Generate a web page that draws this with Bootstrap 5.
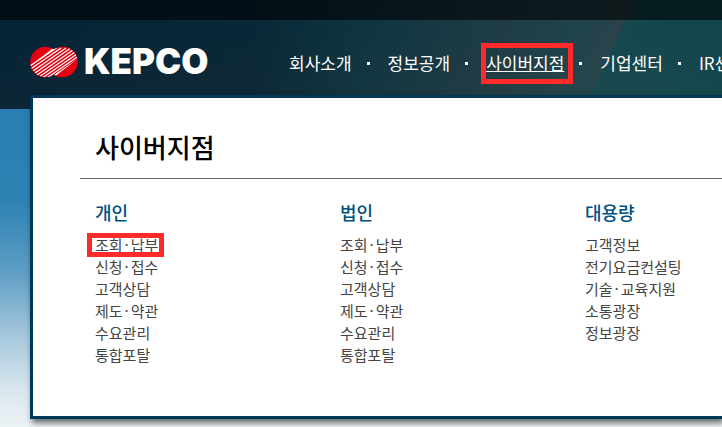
<!DOCTYPE html>
<html lang="ko">
<head>
<meta charset="utf-8">
<meta name="viewport" content="width=device-width, initial-scale=1">
<title>KEPCO 사이버지점</title>
<link href="https://cdn.jsdelivr.net/npm/bootstrap@5.3.0/dist/css/bootstrap.min.css" rel="stylesheet">
<style>
  body {
    font-family: "Noto Sans CJK KR", "Noto Sans", sans-serif;
    background: linear-gradient(#2478ac 0, #2a80b3 120px, #2d82b3 200px, #5c9dc5 270px, #a5c7dc 335px, #d9e6ee 390px, #edf3f6 427px) #edf3f6;
    min-height: 100vh;
    overflow-x: hidden;
  }
  .site-header {
    background:
      linear-gradient(180deg, rgba(0, 31, 51, .3), rgba(28, 38, 46, .3)),
      linear-gradient(116deg, transparent 0 82%, #1b585b 82%, #145659 100%),
      linear-gradient(90deg, #04263a 0, #0a2a3a 35%, #123d48 50%, #2a484e 70%, #2a5358 80%, #3c5054 86%, #17494d 100%);
  }
  .util-bar { height: 20px; background: rgba(0, 0, 0, .6); }
  .main-bar { height: 89px; padding: 0 0 3px 30px; }
  .brand-mark { overflow: visible; }
  .main-menu { font-size: 17px; line-height: 26px; margin-left: 73px; gap: 15px; }
  .main-menu a { color: #fff; }
  .sep { width: 3px; height: 3px; background: #fff; margin-right: 3px; }
  .picked { outline: 5px solid #ff2a2a; }
  .nav-picked { padding: 2px 4px 3px 0; margin-right: -4px; }
  .mega {
    margin: -14px 0 8px 30px;
    padding: 30px 0 50px 47px;
    border: 3px solid #003958;
    border-right: 0;
    background: #fff;
    box-shadow: 2px 4px 6px rgba(0, 0, 0, .55);
  }
  .mega-title {
    font-size: 26px; line-height: 38px; color: #000; font-weight: 500;
    padding: 0 0 12px 15px; margin: 0;
    border-bottom: 1px solid #666;
  }
  .mega-cols { padding: 20px 0 0 15px; }
  .mega-col { width: 245px; }
  .mega-col:last-child { width: auto; }
  .mega-col h3 { font-size: 18px; line-height: 26px; color: #00507f; margin: 0 0 9px; font-weight: 500; }
  .mega-col ul { font-size: 15px; line-height: 22px; }
  .mega-col a { color: #444; }
  .mid { margin: 0 2px; }
  .link-picked { outline-offset: -4px; padding: 0 5px 0 7px; margin-left: -7px; vertical-align: top; }
</style>
<script src="https://cdn.jsdelivr.net/npm/bootstrap@5.3.0/dist/js/bootstrap.bundle.min.js"></script>
</head>
<body>
<header class="site-header overflow-hidden">
  <div class="util-bar"></div>
  <div class="main-bar d-flex align-items-center">
    <a href="#" class="flex-shrink-0 d-block" aria-label="KEPCO">
      <svg class="brand-mark d-block" width="186" height="34" viewBox="0 0 186 34">
        <defs><clipPath id="discs"><circle cx="15.500" cy="16" r="15.300"/><circle cx="32.500" cy="16" r="15.300"/></clipPath></defs>
        <g clip-path="url(#discs)">
          <rect width="48" height="34" fill="#e60012"/>
          <path d="M0 20 L27 1.500 M1 22.700 L31 1.900 M3 24.900 L36 2 M5 26.900 L40 2.600 M7 28.900 L43 4 M9 30.900 L45 6 M13 31.400 L47 8 M16 32.600 L48 10.600" stroke="#fff" stroke-width="1.200"/>
          <path d="M18 33 L48 12.600 L38 20.300 L24 31 Z" fill="#fff"/>
          <path d="M0 20 L22 3 L28 0 L27 2 Z" fill="#fff"/>
        </g>
        <text x="54" y="28" font-family="Inter, sans-serif" font-weight="900" font-size="35" fill="#fff">KEPCO</text>
      </svg>
    </a>
    <nav aria-label="주 메뉴">
      <ul class="main-menu list-unstyled d-flex align-items-center text-nowrap mb-0">
        <li><a class="text-decoration-none" href="#">회사소개</a></li>
        <li class="sep" aria-hidden="true"></li>
        <li><a class="text-decoration-none" href="#">정보공개</a></li>
        <li class="sep" aria-hidden="true"></li>
        <li class="picked nav-picked"><a class="text-decoration-underline" href="#">사이버지점</a></li>
        <li class="sep" aria-hidden="true"></li>
        <li><a class="text-decoration-none" href="#">기업센터</a></li>
        <li class="sep" aria-hidden="true"></li>
        <li><a class="text-decoration-none" href="#">IR센터</a></li>
      </ul>
    </nav>
  </div>
</header>
<main class="mega position-relative">
  <h2 class="mega-title">사이버지점</h2>
  <div class="mega-cols d-flex">
    <section class="mega-col flex-shrink-0">
      <h3>개인</h3>
      <ul class="list-unstyled mb-0">
        <li><a class="text-decoration-none d-inline-block picked link-picked" href="#">조회<span class="mid">·</span>납부</a></li>
        <li><a class="text-decoration-none" href="#">신청<span class="mid">·</span>접수</a></li>
        <li><a class="text-decoration-none" href="#">고객상담</a></li>
        <li><a class="text-decoration-none" href="#">제도<span class="mid">·</span>약관</a></li>
        <li><a class="text-decoration-none" href="#">수요관리</a></li>
        <li><a class="text-decoration-none" href="#">통합포탈</a></li>
      </ul>
    </section>
    <section class="mega-col flex-shrink-0">
      <h3>법인</h3>
      <ul class="list-unstyled mb-0">
        <li><a class="text-decoration-none" href="#">조회<span class="mid">·</span>납부</a></li>
        <li><a class="text-decoration-none" href="#">신청<span class="mid">·</span>접수</a></li>
        <li><a class="text-decoration-none" href="#">고객상담</a></li>
        <li><a class="text-decoration-none" href="#">제도<span class="mid">·</span>약관</a></li>
        <li><a class="text-decoration-none" href="#">수요관리</a></li>
        <li><a class="text-decoration-none" href="#">통합포탈</a></li>
      </ul>
    </section>
    <section class="mega-col flex-shrink-0">
      <h3>대용량</h3>
      <ul class="list-unstyled mb-0">
        <li><a class="text-decoration-none" href="#">고객정보</a></li>
        <li><a class="text-decoration-none" href="#">전기요금컨설팅</a></li>
        <li><a class="text-decoration-none" href="#">기술<span class="mid">·</span>교육지원</a></li>
        <li><a class="text-decoration-none" href="#">소통광장</a></li>
        <li><a class="text-decoration-none" href="#">정보광장</a></li>
      </ul>
    </section>
  </div>
</main>
</body>
</html>
